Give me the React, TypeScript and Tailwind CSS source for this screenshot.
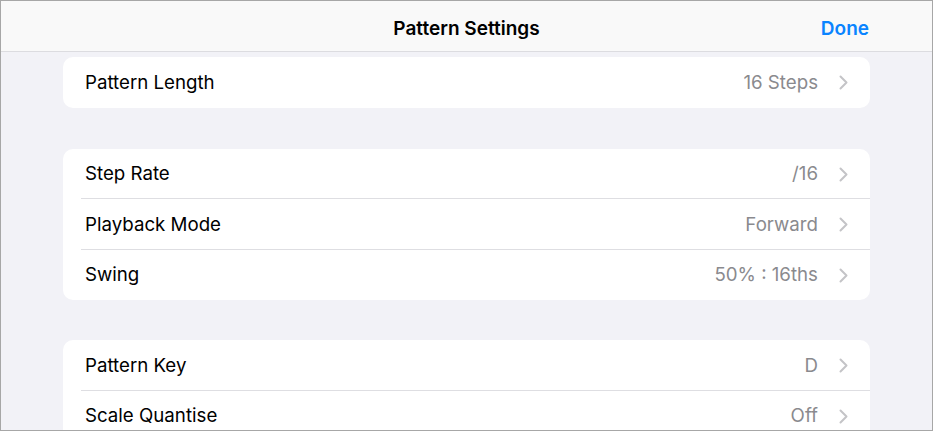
type Row = { label: string; value: string };

const groups: Row[][] = [
  [{ label: "Pattern Length", value: "16 Steps" }],
  [
    { label: "Step Rate", value: "/16" },
    { label: "Playback Mode", value: "Forward" },
    { label: "Swing", value: "50% : 16ths" },
  ],
  [
    { label: "Pattern Key", value: "D" },
    { label: "Scale Quantise", value: "Off" },
  ],
];

function Chevron() {
  return (
    <svg width="9" height="15" viewBox="0 0 9 15" className="ml-[21px] shrink-0" fill="none">
      <path d="M1.5 1.5 L7.5 7.5 L1.5 13.5" stroke="#c4c4c7" strokeWidth="2" strokeLinecap="round" strokeLinejoin="round" />
    </svg>
  );
}

function SettingsRow({ row, last }: { row: Row; last: boolean }) {
  return (
    <div className="relative flex h-[50.5px] items-center pl-[22px] pr-[22px] pt-px">
      <span className="flex-1 text-[18.7px] text-black">{row.label}</span>
      <span className="text-[18.7px] text-[#8a8a8e]">{row.value}</span>
      <Chevron />
      {!last && <div className="absolute bottom-0 left-[18px] right-0 h-px bg-[#dedee2]" />}
    </div>
  );
}

export default function App() {
  return (
    <div className="h-[431px] w-[934px] bg-white" style={{ fontFamily: "Inter, 'Noto Sans', sans-serif" }}>
      <div className="flex h-[431px] w-[933px] flex-col overflow-hidden border border-[#a7a7a7] bg-[#f2f2f7]">
        <header className="relative flex h-[51px] shrink-0 items-center justify-center border-b border-[#dcdce0] bg-[#f9f9f9] pt-[6px]">
          <h1 className="text-[19px] font-semibold text-black">Pattern Settings</h1>
          <button className="absolute right-[63px] top-[14px] text-[19px] font-semibold text-[#0a84ff]">Done</button>
        </header>
        <div className="flex flex-col px-[62px] pt-[5px]">
          {groups.map((g, i) => (
            <div key={i} className={`overflow-hidden rounded-[10px] bg-white ${i === 1 ? "mt-[41px]" : i === 2 ? "mt-[40px]" : ""}`}>
              {g.map((r, j) => (
                <SettingsRow key={r.label} row={r} last={j === g.length - 1} />
              ))}
            </div>
          ))}
        </div>
      </div>
    </div>
  );
}
